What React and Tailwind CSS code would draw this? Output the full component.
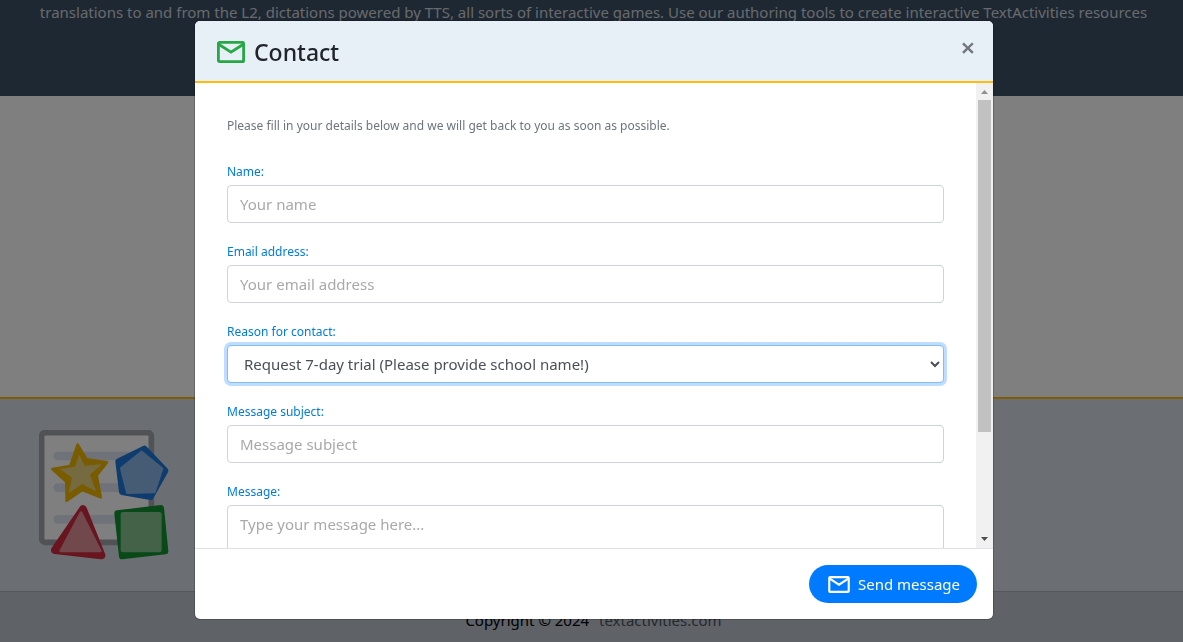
import { useState } from "react";

const reasons = [
  "Request 7-day trial (Please provide school name!)",
  "General enquiry",
  "Technical support",
];

const inputClass =
  "block h-[38px] w-full rounded border border-[#ced4da] bg-white px-3 text-[15px] text-[#495057] outline-none placeholder:text-[#a9a9a9]";

const MailIcon = ({ className }) => (
  <svg
    className={className}
    viewBox="0 0 28 22"
    fill="none"
    stroke="currentColor"
    strokeWidth="2.8"
    strokeLinejoin="round"
    aria-hidden="true"
  >
    <rect x="1.400" y="1.400" width="25.200" height="19.200" rx="1.200" />
    <path d="M2 3.500L14 11.200L26 3.500" strokeLinejoin="miter" />
  </svg>
);

const Logo = () => (
  <svg width="130" height="130" viewBox="58 120 390 390" aria-hidden="true">
    <rect x="66" y="128" width="329" height="329" rx="10" fill="#fff" stroke="#a0a5ab" strokeWidth="17" />
    <g stroke="#dfe6f3" strokeWidth="26" strokeLinecap="round">
      <path d="M114 198H340M114 293H340M114 388H340" />
    </g>
    <g strokeLinejoin="round">
      <path
        d="M174 164L201 208L262 217L231 256L243 322L188 300L141 332L140 275L98 237L152 228Z"
        fill="#f5b800"
        stroke="#f5b800"
        strokeWidth="8"
      />
      <path d="M178 194L195 227L246 223L211 254L229 304L188 282L147 309L157 263L121 237L166 230Z" fill="#ecd680" />
      <path d="M374 176L437 242L393 321L307 306L296 214Z" fill="#1f78dc" stroke="#1f78dc" strokeWidth="18" />
      <path d="M366 186L427 236L404 306L323 308L305 235Z" fill="#8db8ea" stroke="#8db8ea" strokeWidth="8" />
      <path d="M190 358L245 496L106 480Z" fill="#d02a40" stroke="#d02a40" strokeWidth="24" />
      <path d="M184 368L242 483L123 483Z" fill="#e3929a" stroke="#e3929a" strokeWidth="8" />
      <path d="M424 354L437 484L307 499L293 370Z" fill="#12902f" stroke="#12902f" strokeWidth="18" />
      <rect x="303" y="366" width="123" height="121" rx="7" fill="#86c491" />
    </g>
  </svg>
);

const Field = ({ id, label, children }) => (
  <div className="mb-5">
    <label htmlFor={id} className="mb-1 block text-[12px] leading-[18px] text-[#007bdb]">
      {label}
    </label>
    {children}
  </div>
);

// scroll bar column next to the form
const ScrollTrack = () => (
  <div className="flex w-[17px] shrink-0 flex-col items-center bg-[#f1f1f1]" aria-hidden="true">
    <svg width="17" height="17" viewBox="0 0 17 17" className="shrink-0">
      <path d="M5 11L8.500 7L12 11Z" fill="#8f8f8f" />
    </svg>
    <div className="flex w-[13px] grow flex-col">
      <div className="h-[77%] bg-[#c1c1c1]"></div>
    </div>
    <svg width="17" height="17" viewBox="0 0 17 17" className="shrink-0">
      <path d="M5 6L8.500 10L12 6Z" fill="#505050" />
    </svg>
  </div>
);

const ContactModal = ({ onClose }) => {
  const [reason, setReason] = useState(reasons[0]);

  return (
    <div className="fixed inset-0 flex justify-center bg-black/50 pt-5 pb-[22px] pl-[5px]">
      <div
        role="dialog"
        aria-labelledby="contact-title"
        className="flex w-full max-w-[800px] flex-col overflow-hidden rounded-md border border-black/20 bg-white bg-clip-padding"
      >
        <div className="flex h-[62px] shrink-0 items-center border-b-2 border-[#fbbc0c] bg-[#e7eff7] pt-0.5 pr-4 pl-[22px]">
          <MailIcon className="h-[22px] w-7 text-[#28a745]" />
          <h5 id="contact-title" className="ml-[9px] text-[23px] font-medium text-[#212529]">
            Contact
          </h5>
          <button
            type="button"
            aria-label="Close"
            onClick={onClose}
            className="mb-2.5 ml-auto w-[18px] text-center text-[26px] leading-6 font-semibold text-[#73777b]"
          >
            ×
          </button>
        </div>

        <div className="flex min-h-0 grow">
          <form id="contact-form" className="min-w-0 grow overflow-hidden px-8 pt-8">
            <p className="mb-[26px] text-[12px] leading-[22px] text-[#6c757d]">
              Please fill in your details below and we will get back to you as soon as possible.
            </p>
            <Field id="name" label="Name:">
              <input id="name" type="text" placeholder="Your name" className={inputClass} />
            </Field>
            <Field id="email" label="Email address:">
              <input id="email" type="email" placeholder="Your email address" className={inputClass} />
            </Field>
            <Field id="reason" label="Reason for contact:">
              <select
                id="reason"
                value={reason}
                onChange={(e) => setReason(e.target.value)}
                className="block h-[38px] w-full rounded border border-[#80bdff] bg-white px-3 text-[15px] text-[#495057] ring-3 ring-[#bfdeff] outline-none"
              >
                {reasons.map((item) => (
                  <option key={item}>{item}</option>
                ))}
              </select>
            </Field>
            <Field id="subject" label="Message subject:">
              <input id="subject" type="text" placeholder="Message subject" className={inputClass} />
            </Field>
            <Field id="message" label="Message:">
              <textarea
                id="message"
                rows="5"
                placeholder="Type your message here..."
                className="block w-full resize-none rounded border border-[#ced4da] bg-white px-3 py-1.5 text-[15px] leading-6 text-[#495057] outline-none placeholder:text-[#a9a9a9]"
              ></textarea>
            </Field>
          </form>
          <ScrollTrack />
        </div>

        <div className="flex shrink-0 justify-end border-t border-[#dee2e6] p-4">
          <button
            type="submit"
            form="contact-form"
            className="flex h-[38px] items-center gap-2 rounded-full bg-[#007bff] pr-[17px] pl-[19px] text-[15px] text-white"
          >
            <MailIcon className="h-[17px] w-[22px]" />
            Send message
          </button>
        </div>
      </div>
    </div>
  );
};

export default function App() {
  const [open, setOpen] = useState(true);

  return (
    <div className="flex h-screen flex-col overflow-hidden bg-white font-['Noto_Sans',sans-serif] text-[15px]">
      <header className="h-24 shrink-0 bg-[#3d5166] pl-1 text-center leading-6 whitespace-nowrap text-[#d0d4d8]">
        <p>
          translations to and from the L2, dictations powered by TTS, all sorts of interactive games. Use our authoring
          tools to create interactive TextActivities resources
        </p>
      </header>
      <main className="grow"></main>
      <footer className="shrink-0">
        <div className="border-t-2 border-[#fbbc0c] bg-[#d7dee8] px-[39px] py-[31px]">
          <Logo />
        </div>
        <div className="h-[51px] border-t border-[#a9afb8] bg-[#bfc6d0] pt-4 pl-1 text-center leading-6 text-black">
          Copyright © 2024{" "}
          <a href="#" className="ml-1.5 text-[#4d545c]">
            textactivities.com
          </a>
        </div>
      </footer>
      {open && <ContactModal onClose={() => setOpen(false)} />}
    </div>
  );
}
